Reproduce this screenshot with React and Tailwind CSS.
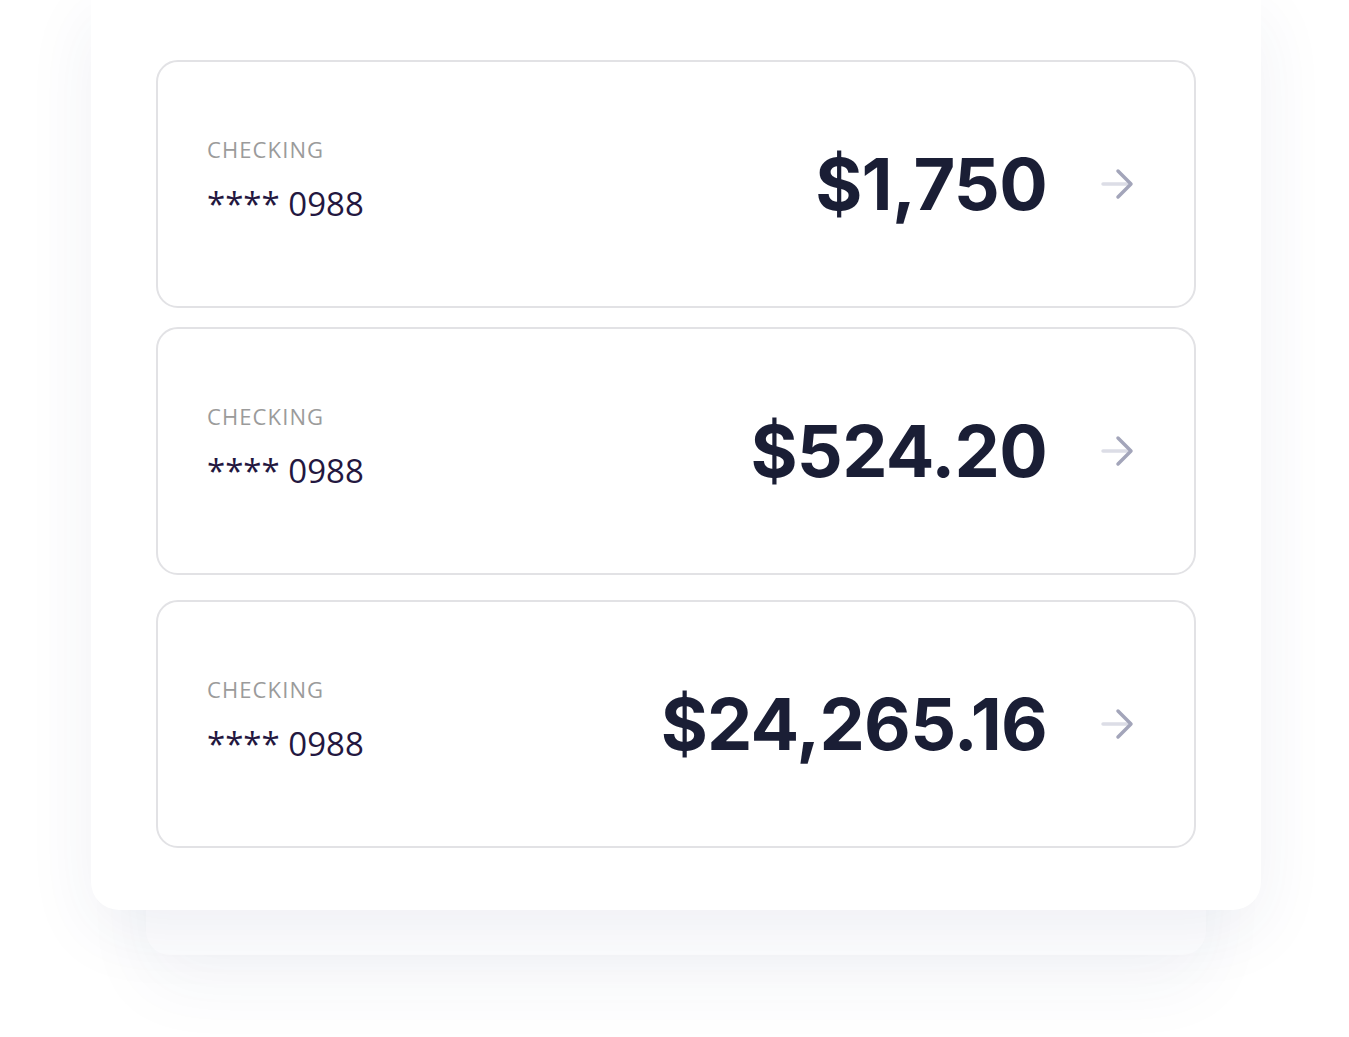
import React from 'react';

const accounts = [
    { type: 'CHECKING', mask: '**** 0988', amount: '$1,750' },
    { type: 'CHECKING', mask: '**** 0988', amount: '$524.20' },
    { type: 'CHECKING', mask: '**** 0988', amount: '$24,265.16' },
];

function Arrow() {
    return (
        <svg width="36" height="32" viewBox="0 0 36 32" fill="none" strokeLinecap="round" strokeLinejoin="round">
            <path d="M3 16H30" stroke="#dcdde6" strokeWidth="3.5" />
            <path d="M18 3L31 16L18 29" stroke="#a3a5ba" strokeWidth="3.5" />
        </svg>
    );
}

function AccountRow({ account, className }) {
    return (
        <div className={`flex items-center h-[248px] rounded-[22px] border-2 border-[#e2e2e5] bg-white pl-[49px] pr-[58px] ${className}`}>
            <div className="flex flex-col -mt-[10px]">
                <span className="text-[22px] leading-[28px] font-medium text-[#9b9b9b] font-['Open_Sans',sans-serif] tracking-[0.05em]">{account.type}</span>
                <span className="mt-[21px] text-[33px] leading-[40px] font-medium text-[#24173f] font-['Open_Sans',sans-serif]">{account.mask}</span>
            </div>
            <div className="ml-auto mr-[53px] text-[72px] leading-none font-bold tracking-[-0.01em] text-[#1a1e35] font-['Inter',sans-serif]">
                {account.amount}
            </div>
            <Arrow />
        </div>
    );
}

export default function App() {
    return (
        <div className="min-h-[1037px] bg-white overflow-hidden">
            <div className="relative w-[1170px] ml-[91px]">
                <div className="absolute left-[55px] right-[55px] -bottom-[45px] h-[200px] rounded-b-[24px] bg-[#fdfdfe] shadow-[0_30px_70px_rgba(40,50,110,0.05)]" />
                <div className="relative rounded-b-[28px] bg-white pt-[60px] pb-[62px] px-[65px] shadow-[0_20px_70px_rgba(40,50,110,0.07)]">
                    <AccountRow account={accounts[0]} />
                    <AccountRow account={accounts[1]} className="mt-[19px]" />
                    <AccountRow account={accounts[2]} className="mt-[25px]" />
                </div>
            </div>
        </div>
    );
}
